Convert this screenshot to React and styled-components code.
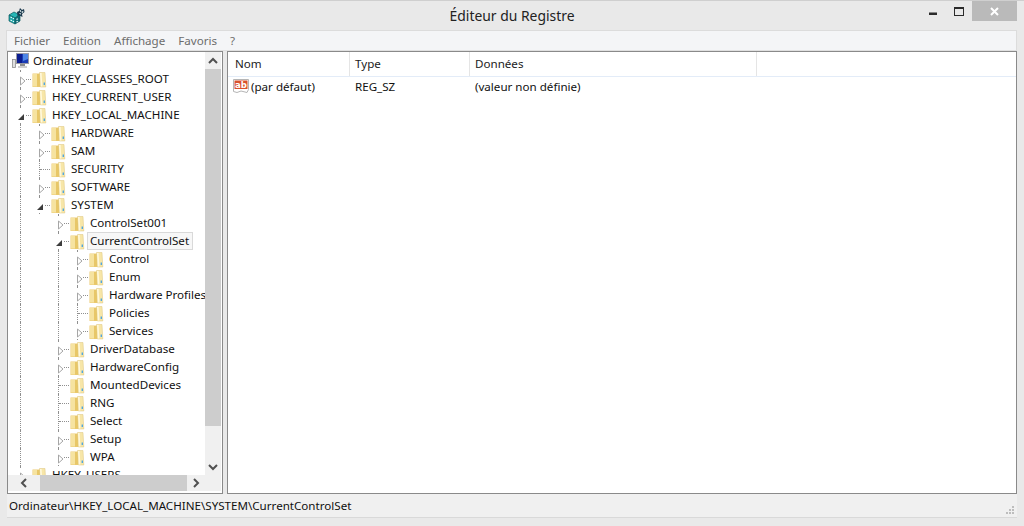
import React from "react";
import styled, { createGlobalStyle } from "styled-components";

const Global = createGlobalStyle`
  html, body { margin: 0; padding: 0; background: #e9e9e9; }
  * { box-sizing: border-box; }
`;

const Win = styled.div`
  width: 1024px; height: 526px; overflow: hidden;
  display: flex; flex-direction: column;
  background: #e9e9e9; border-top: 1px solid #cfcfcf;
  font-family: "Noto Sans", "Open Sans", sans-serif; font-size: 11.6px; color: #111;
`;
const TitleBar = styled.div`
  height: 29px; flex: none; position: relative;
  display: flex; align-items: flex-start; justify-content: center;
`;
const AppIcon = styled.svg`
  position: absolute; left: 8px; top: 6px;
`;
const Title = styled.div`
  font-size: 13.9px; line-height: 29px; color: #222;
`;
const Controls = styled.div`
  position: absolute; right: 7px; top: 0; height: 20px;
  display: flex; align-items: flex-start;
`;
const Ctl = styled.div`
  width: ${p => p.$w}px; height: 20px;
  display: flex; align-items: center; justify-content: center;
  background: ${p => p.$bg || "transparent"};
`;
const MenuBar = styled.div`
  flex: none; height: 21px; margin: 0 7px 0 6px;
  background: #f4f5f7; border: 1px solid #dcdcdc; border-bottom-color: #e0e0e0;
  display: flex; align-items: center; padding-left: 7px; gap: 13px;
  color: #6d6d6d;
`;
const MenuItem = styled.span``;
const Panes = styled.div`
  flex: none; height: 443px; margin: 0 7px 0 7px;
  display: flex; gap: 4px;
`;
const TreePane = styled.div`
  width: 216px; flex: none; background: #fff; border: 1px solid #8a8a8a;
  display: grid; grid-template-columns: 197px 16px; grid-template-rows: 423px 16px;
`;
const TreeBody = styled.div`
  overflow: hidden; background: #fff; white-space: nowrap;
`;
const Row = styled.div`
  height: 18px; display: flex; align-items: center;
`;
const Guide = styled.div`
  width: 19px; height: 18px; flex: none; position: relative;
  &::before {
    content: ""; position: absolute; left: 12px; top: 0; height: 18px;
    border-left: 1px dotted ${p => (p.$on ? "#8f8f8f" : "transparent")};
  }
`;
const Spacer = styled.div`
  width: ${p => p.$w}px; flex: none;
`;
const Connector = styled.div`
  width: 24px; height: 18px; flex: none; position: relative;
  &::after {
    content: ""; position: absolute; left: 13px; top: 9px; width: 10px;
    border-top: 1px dotted #8f8f8f;
  }
  &::before {
    content: ""; position: absolute; left: 12px; top: 0; height: 18px;
    border-left: 1px dotted #8f8f8f;
  }
`;
const Expander = styled.svg`
  position: absolute; left: 8px; top: 2px; background: #fff; z-index: 1;
`;
const Label = styled.span`
  margin-left: 1px; padding: 0 3px 0 2px; height: 18px; line-height: 15px;
  border: 1px solid ${p => (p.$sel ? "#d9d9d9" : "transparent")};
  background: ${p => (p.$sel ? "#f7f7f7" : "transparent")};
  display: inline-block;
`;
const FolderWrap = styled.div`
  flex: none; width: 16px; height: 18px; background: #fff; position: relative; z-index: 1;
  display: flex;
`;
const ScrollV = styled.div`
  background: #f0f0f0; display: flex; flex-direction: column; align-items: center;
`;
const ScrollH = styled.div`
  background: #f0f0f0; display: flex; align-items: center;
`;
const Corner = styled.div` background: #f0f0f0; `;
const ArrowBox = styled.div`
  flex: none; width: ${p => p.$w}px; height: ${p => p.$h}px;
  display: flex; align-items: center; justify-content: center;
`;
const ThumbV = styled.div`
  width: 16px; height: 357px; background: #cdcdcd; flex: none;
`;
const Gap = styled.div` flex: 1; `;
const ThumbH = styled.div`
  width: 147px; height: 16px; background: #cdcdcd; flex: none;
`;
const ListPane = styled.div`
  flex: 1; background: #fff; border: 1px solid #8a8a8a; min-width: 0;
`;
const Header = styled.div`
  height: 25px; display: flex; border-bottom: 1px solid #e3ecf8;
`;
const HeadCell = styled.div`
  width: ${p => p.$w}px; flex: none; padding-left: ${p => p.$pl}px; line-height: 24px;
  border-right: 1px solid #e5e5e5; color: #222;
`;
const DataRow = styled.div`
  height: 18px; margin-top: 0; display: flex; align-items: center;
`;
const NameCell = styled.div`
  width: ${p => p.$w}px; flex: none; display: flex; align-items: center; gap: 2px; padding-left: ${p => p.$pl}px;
`;
const StatusBar = styled.div`
  flex: none; height: 24px; margin: 0 7px; padding-left: 2px;
  background: #f0f0f0; border-bottom: 1px solid #d9d9d9;
  display: flex; align-items: center; position: relative; color: #111;
`;
const Grip = styled.svg`
  position: absolute; right: 2px; bottom: 2px;
`;

const Folder = () => (
  <svg width="15" height="18" viewBox="0 0 15 18">
    <path d="M.5 3.500h8V17H.5z" fill="#eccb72" />
    <path d="M1 4h4v12.500H1z" fill="#f6e3a0" />
    <path d="M5 4h3v12.500H5z" fill="#e8c768" />
    <path d="M7.500 2.500h5.500l.8 14.500H8.500z" fill="#f7e6a8" stroke="#dcc57c" strokeWidth=".5" />
    <path d="M8 3h1.600l.8 13.500H8.800z" fill="#fff9dd" />
    <path d="M11.600 12.500h1.400v2.500h-1.400z" fill="#4fa6df" />
  </svg>
);

const Closed = () => (
  <Expander width="10" height="14" viewBox="0 0 10 14">
    <path d="M4.500 5L9 9 4.500 13z" fill="#fff" stroke="#a6a6a6" />
  </Expander>
);
const Open = () => (
  <Expander width="10" height="14" viewBox="0 0 10 14">
    <path d="M8 6V12H2z" fill="#3c3c3c" />
  </Expander>
);

const Computer = () => (
  <svg width="17" height="16" viewBox="0 0 17 16">
    <rect x=".5" y="6.500" width="3" height="8" fill="#e0e0e0" stroke="#8e8e8e" strokeWidth=".8" />
    <rect x="4.500" y=".5" width="12" height="10" fill="#1a3cb5" stroke="#9a9aa6" />
    <path d="M5 1h5v9H5z" fill="#0b1d90" />
    <path d="M11 1h5v5l-5 2z" fill="#4e86e6" />
    <rect x="8" y="11" width="5" height="2" fill="#8e8e8e" />
    <rect x="6" y="13" width="9" height="2" fill="#cfcfcf" />
  </svg>
);

const RegIcon = () => (
  <svg width="16" height="16" viewBox="0 0 16 16">
    <path d="M.5 1.500h15v10l-1.500 3-6-1.500-4 1.500-3.500-1z" fill="#fff" stroke="#b5b5b5" />
    <rect x="1.500" y="2.500" width="13" height="8.500" fill="#d9512c" />
    <text x="2" y="10" fontFamily="DejaVu Sans" fontWeight="700" fontSize="8.500" fill="#fff">ab</text>
  </svg>
);

const tree = [
  { l: "Ordinateur", root: true },
  { l: "HKEY_CLASSES_ROOT", g: [], s: "c" },
  { l: "HKEY_CURRENT_USER", g: [], s: "c" },
  { l: "HKEY_LOCAL_MACHINE", g: [], s: "o" },
  { l: "HARDWARE", g: [1], s: "c" },
  { l: "SAM", g: [1], s: "c" },
  { l: "SECURITY", g: [1], s: "l" },
  { l: "SOFTWARE", g: [1], s: "c" },
  { l: "SYSTEM", g: [1], s: "o" },
  { l: "ControlSet001", g: [1, 0], s: "c" },
  { l: "CurrentControlSet", g: [1, 0], s: "o", sel: true },
  { l: "Control", g: [1, 0, 1], s: "c" },
  { l: "Enum", g: [1, 0, 1], s: "c" },
  { l: "Hardware Profiles", g: [1, 0, 1], s: "c" },
  { l: "Policies", g: [1, 0, 1], s: "l" },
  { l: "Services", g: [1, 0, 1], s: "c" },
  { l: "DriverDatabase", g: [1, 0], s: "c" },
  { l: "HardwareConfig", g: [1, 0], s: "c" },
  { l: "MountedDevices", g: [1, 0], s: "l" },
  { l: "RNG", g: [1, 0], s: "l" },
  { l: "Select", g: [1, 0], s: "l" },
  { l: "Setup", g: [1, 0], s: "c" },
  { l: "WPA", g: [1, 0], s: "c" },
  { l: "HKEY_USERS", g: [], s: "c" },
];

const Chev = ({ d }) => (
  <svg width="10" height="10" viewBox="0 0 10 10">
    <path d={d} fill="none" stroke="#505050" strokeWidth="2" />
  </svg>
);

export default function App() {
  return (
    <Win>
      <Global />
      <TitleBar>
        <AppIcon width="18" height="18" viewBox="0 0 18 18">
          <path d="M1 8l5-3 6 3-5 3z" fill="#27b6b6" stroke="#0d5a60" strokeWidth=".7" />
          <path d="M1 8l6 3v6l-6-3z" fill="#1aa5a8" stroke="#0d5a60" strokeWidth=".7" />
          <path d="M7 11l5-3v6l-5 3z" fill="#0e6f78" stroke="#0d5a60" strokeWidth=".7" />
          <path d="M2.500 10l1.500.8M4.800 11.200l1.200.6M2.500 13l1.500.8M4.800 14.200l1.200.6M8.500 12.500l1.300-.8M8.500 15l1.300-.8" stroke="#e8fcfc" strokeWidth="1.200" />
          <path d="M9 5l2-1 1-3 2 2 2-1 .5 3-2.500 2 .5 3-3-1.500-2 .5z" fill="#1c3a4e" />
          <path d="M12 3l1 2M15 4l-1 2M11.500 6.500l1.500.5" stroke="#eaf6f6" />
        </AppIcon>
        <Title>Éditeur du Registre</Title>
        <Controls>
          <Ctl $w={27}>
            <svg width="8" height="10" viewBox="0 0 8 10"><rect y="6.500" width="8" height="2.500" fill="#2b2b2b" /></svg>
          </Ctl>
          <Ctl $w={26}>
            <svg width="10" height="9" viewBox="0 0 10 9">
              <rect x=".5" y=".5" width="9" height="8" fill="none" stroke="#2b2b2b" /><rect x="0" y="0" width="10" height="2" fill="#2b2b2b" />
            </svg>
          </Ctl>
          <Ctl $w={45} $bg="#bababa">
            <svg width="9" height="9" viewBox="0 0 9 9"><path d="M1 1l7 7M8 1l-7 7" stroke="#fff" strokeWidth="2" /></svg>
          </Ctl>
        </Controls>
      </TitleBar>
      <MenuBar>
        <MenuItem>Fichier</MenuItem>
        <MenuItem>Edition</MenuItem>
        <MenuItem>Affichage</MenuItem>
        <MenuItem>Favoris</MenuItem>
        <MenuItem>?</MenuItem>
      </MenuBar>
      <Panes>
        <TreePane>
          <TreeBody>
            {tree.map((n) =>
              n.root ? (
                <Row key={n.l}>
                  <Spacer $w={4} />
                  <Computer />
                  <Label>{n.l}</Label>
                </Row>
              ) : (
                <Row key={n.l}>
                  {n.g.map((on, i) => (
                    <Guide key={i} $on={!!on} />
                  ))}
                  <Connector>
                    {n.s === "c" && <Closed />}
                    {n.s === "o" && <Open />}
                  </Connector>
                  <FolderWrap><Folder /></FolderWrap>
                  <Label $sel={n.sel}>{n.l}</Label>
                </Row>
              )
            )}
          </TreeBody>
          <ScrollV>
            <ArrowBox $w={16} $h={17}><Chev d="M1 7l4-4 4 4" /></ArrowBox>
            <ThumbV />
            <Gap />
            <ArrowBox $w={16} $h={17}><Chev d="M1 3l4 4 4-4" /></ArrowBox>
          </ScrollV>
          <ScrollH>
            <ArrowBox $w={32} $h={16}><Chev d="M7 1L3 5l4 4" /></ArrowBox>
            <ThumbH />
            <Gap />
            <ArrowBox $w={18} $h={16}><Chev d="M3 1l4 4-4 4" /></ArrowBox>
          </ScrollH>
          <Corner />
        </TreePane>
        <ListPane>
          <Header>
            <HeadCell $w={122} $pl={7}>Nom</HeadCell>
            <HeadCell $w={120} $pl={5}>Type</HeadCell>
            <HeadCell $w={287} $pl={5}>Données</HeadCell>
          </Header>
          <DataRow>
            <NameCell $w={122} $pl={5}><RegIcon />(par défaut)</NameCell>
            <NameCell $w={120} $pl={5}>REG_SZ</NameCell>
            <NameCell $w={287} $pl={5}>(valeur non définie)</NameCell>
          </DataRow>
        </ListPane>
      </Panes>
      <StatusBar>
        Ordinateur\HKEY_LOCAL_MACHINE\SYSTEM\CurrentControlSet
        <Grip width="10" height="10" viewBox="0 0 10 10">
          <path d="M7 1h2v2H7zM4 4h2v2H4zM7 4h2v2H7zM1 7h2v2H1zM4 7h2v2H4zM7 7h2v2H7z" fill="#bdbdbd" />
        </Grip>
      </StatusBar>
    </Win>
  );
}
